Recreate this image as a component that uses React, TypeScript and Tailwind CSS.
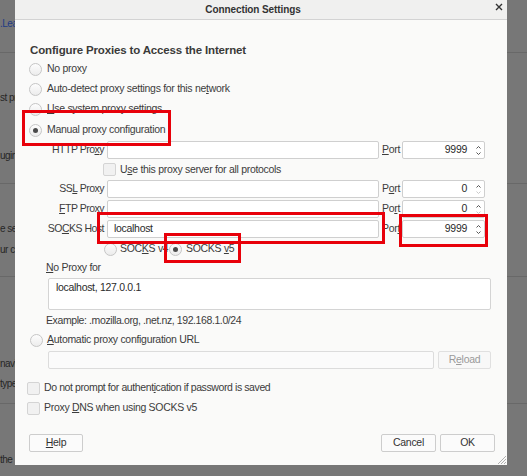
import React from "react";

function Radio({ checked }: { checked?: boolean }) {
  return (
    <span className="flex h-[13px] w-[13px] shrink-0 items-center justify-center rounded-full border border-[#c6c6c6] bg-gradient-to-b from-[#fdfdfd] to-[#ececec]">
      {checked && <span className="h-[5px] w-[5px] rounded-full bg-[#4a4a4a]" />}
    </span>
  );
}

function Check() {
  return <span className="h-[13px] w-[13px] shrink-0 rounded-[2px] border border-[#d4d4d4] bg-[#f1f1f1]" />;
}

function U({ children }: { children: React.ReactNode }) {
  return <span className="underline underline-offset-[1px]">{children}</span>;
}

function Spinner({ downDisabled }: { downDisabled?: boolean }) {
  return (
    <div className="flex h-full w-[10px] flex-col items-center justify-center gap-[3px] pr-[1px]">
      <svg width="5" height="3" viewBox="0 0 5 3">
        <path d="M0.5 2.5 L2.5 0.5 L4.5 2.5" fill="none" stroke="#555" strokeWidth="1" />
      </svg>
      <svg width="5" height="3" viewBox="0 0 5 3">
        <path d="M0.5 0.5 L2.5 2.5 L4.5 0.5" fill="none" stroke={downDisabled ? "#c8c8c8" : "#555"} strokeWidth="1" />
      </svg>
    </div>
  );
}

function ProxyRow({
  label,
  value,
  port,
  portLabel,
  downDisabled,
}: {
  label: React.ReactNode;
  value?: string;
  port: string;
  portLabel: React.ReactNode;
  downDisabled?: boolean;
}) {
  return (
    <div className="flex h-[20px] items-center">
      <div className="ml-[18px] w-[57px] whitespace-nowrap text-right tracking-[-0.5px]">{label}</div>
      <div className="ml-[3px] flex h-[18px] w-[272px] items-center rounded-[2px] border border-[#cfcfcf] bg-white pl-[6px] text-[#2a2a2a]">
        {value}
      </div>
      <div className="ml-[3px] w-[20px]">{portLabel}</div>
      <div className="flex h-[18px] w-[83px] items-center rounded-[2px] border border-[#cfcfcf] bg-white">
        <div className="flex-1 pr-[7px] text-right text-[#2a2a2a]">{port}</div>
        <Spinner downDisabled={downDisabled} />
      </div>
    </div>
  );
}

export default function App() {
  return (
    <div className="relative h-[476px] w-[527px] overflow-hidden bg-[#777777] font-['Liberation_Sans',Arial,sans-serif] text-[10.5px] tracking-[-0.3px]">
      {/* background page */}
      <div className="flex flex-col whitespace-nowrap text-[10px] tracking-[-0.5px] text-[#262626]">
        <div className="mt-[14px] flex h-[18px] items-center text-[#1e3b85]">.Learn more</div>
        <div className="mt-[20px] h-px w-full bg-[#686868]" />
        <div className="mt-[35px] flex h-[18px] items-center">st proxy</div>
        <div className="mt-[40px] flex h-[18px] items-center">ugins</div>
        <div className="mt-[19px] h-px w-full bg-[#686868]" />
        <div className="mt-[35px] flex h-[18px] items-center">e settings</div>
        <div className="mt-[3px] flex h-[18px] items-center">ur connection</div>
        <div className="mt-[18px] h-px w-full bg-[#686868]" />
        <div className="mt-[77px] flex h-[18px] items-center">navigation</div>
        <div className="mt-[2px] flex h-[18px] items-center">type</div>
        <div className="mt-[11px] h-px w-full bg-[#686868]" />
        <div className="mt-[46px] flex h-[18px] items-center">the</div>
      </div>

      {/* dialog */}
      <div className="absolute left-[15px] top-0 flex h-[465px] w-[492px] flex-col bg-[#fafaf9] text-[#3c3c3c]">
        <div className="relative flex h-[20px] shrink-0 items-center justify-center border-b border-[#d3d3d3] bg-[#f0f0ef] pr-[16px] text-[10px] font-bold tracking-[-0.1px] text-[#333]">
          Connection Settings
          <svg className="absolute right-[4px] top-[3px]" width="8" height="8" viewBox="0 0 8 8">
            <path d="M1 1 L7 7 M7 1 L1 7" stroke="#333" strokeWidth="1.4" />
          </svg>
        </div>

        <div className="flex flex-1 flex-col pl-[14px] pr-[16px]">
          <div className="mt-[22px] flex h-[17px] items-center pl-[1px] text-[11.5px] font-bold tracking-[-0.15px] text-[#3a3a3a]">
            Configure Proxies to Access the Internet
          </div>
          <div className="flex h-[20px] items-center gap-[5px]">
            <Radio />
            <span>No proxy</span>
          </div>
          <div className="flex h-[20px] items-center gap-[5px]">
            <Radio />
            <span>
              Auto-detect proxy settings for this ne<U>t</U>work
            </span>
          </div>
          <div className="flex h-[20px] items-center gap-[5px]">
            <Radio />
            <span>
              <U>U</U>se system proxy settings
            </span>
          </div>
          <div className="mt-[1px] flex h-[20px] items-center gap-[5px]">
            <Radio checked />
            <span>Manual proxy configuration</span>
          </div>

          <ProxyRow
            label={
              <>
                HTTP Pro<U>x</U>y
              </>
            }
            port="9999"
            portLabel={
              <>
                <U>P</U>ort
              </>
            }
          />
          <div className="flex h-[19px] items-center gap-[4px] pl-[74px]">
            <Check />
            <span>
              U<U>s</U>e this proxy server for all protocols
            </span>
          </div>
          <ProxyRow
            label={
              <>
                SS<U>L</U> Proxy
              </>
            }
            port="0"
            downDisabled
            portLabel={
              <>
                P<U>o</U>rt
              </>
            }
          />
          <ProxyRow
            label={
              <>
                <U>F</U>TP Proxy
              </>
            }
            port="0"
            downDisabled
            portLabel={
              <>
                Po<U>r</U>t
              </>
            }
          />
          <ProxyRow
            label={
              <>
                SO<U>C</U>KS Host
              </>
            }
            value="localhost"
            port="9999"
            portLabel={
              <>
                Por<U>t</U>
              </>
            }
          />
          <div className="flex h-[20px] items-center pl-[75px]">
            <Radio />
            <span className="ml-[3px] w-[49px] whitespace-nowrap">
              SOC<U>K</U>S v4
            </span>
            <Radio checked />
            <span className="ml-[4px] whitespace-nowrap">
              SOCKS <U>v</U>5
            </span>
          </div>
          <div className="flex h-[18px] items-center pl-[17px]">
            <span>
              <U>N</U>o Proxy for
            </span>
          </div>
          <div className="ml-[19px] mt-[1px] h-[32px] rounded-[2px] border border-[#d4d4d4] bg-white pl-[7px] pt-[1px] text-[#2a2a2a]">
            localhost, 127.0.0.1
          </div>
          <div className="mt-[2px] flex h-[18px] items-center pl-[17px] tracking-[-0.4px]">
            Example: .mozilla.org, .net.nz, 192.168.1.0/24
          </div>
          <div className="flex h-[20px] items-center gap-[4px] pl-[1px]">
            <Radio />
            <span>
              <U>A</U>utomatic proxy configuration URL
            </span>
          </div>
          <div className="mt-[1px] flex h-[18px] items-center">
            <div className="ml-[19px] h-[18px] w-[386px] rounded-[2px] border border-[#dcdcdc] bg-[#fbfbfb]" />
            <div className="ml-[4px] flex h-[18px] w-[53px] items-center justify-center rounded-[2px] border border-[#e0e0e0] bg-[#f8f8f8] text-[#9a9a9a]">
              R<U>e</U>load
            </div>
          </div>

          <div className="ml-[-2px] mt-[9px] flex h-[20px] items-center gap-[4px] tracking-[-0.4px]">
            <Check />
            <span>
              Do not prompt for authent<U>i</U>cation if password is saved
            </span>
          </div>
          <div className="ml-[-2px] flex h-[20px] items-center gap-[4px]">
            <Check />
            <span>
              Proxy <U>D</U>NS when using SOCKS v5
            </span>
          </div>

          <div className="mr-[-4px] mt-[16px] flex h-[18px] items-center justify-between">
            <div className="flex h-[18px] w-[54px] items-center justify-center rounded-[2px] border border-[#cdcdcd] bg-[#fbfbfb] text-[#333]">
              <U>H</U>elp
            </div>
            <div className="flex gap-[4px]">
              <div className="flex h-[18px] w-[55px] items-center justify-center rounded-[2px] border border-[#cdcdcd] bg-[#fbfbfb] text-[#333]">
                Cancel
              </div>
              <div className="flex h-[18px] w-[55px] items-center justify-center rounded-[2px] border border-[#cdcdcd] bg-[#fbfbfb] text-[#333]">
                OK
              </div>
            </div>
          </div>
        </div>

        <svg className="absolute bottom-[1px] right-[1px]" width="8" height="8" viewBox="0 0 8 8">
          <path d="M8 0 L0 8 M8 3 L3 8 M8 6 L6 8" stroke="#b0b0b0" strokeWidth="1" />
        </svg>
      </div>

      {/* annotation boxes */}
      <div className="absolute left-[22px] top-[110px] h-[36px] w-[149px] border-[3px] border-[#e8000a]" />
      <div className="absolute left-[97px] top-[212px] h-[32px] w-[288px] border-[3px] border-[#e8000a]" />
      <div className="absolute left-[399px] top-[214px] h-[33px] w-[89px] border-[3px] border-[#e8000a]" />
      <div className="absolute left-[164px] top-[233px] h-[30px] w-[77px] border-[3px] border-[#e8000a]" />
    </div>
  );
}
